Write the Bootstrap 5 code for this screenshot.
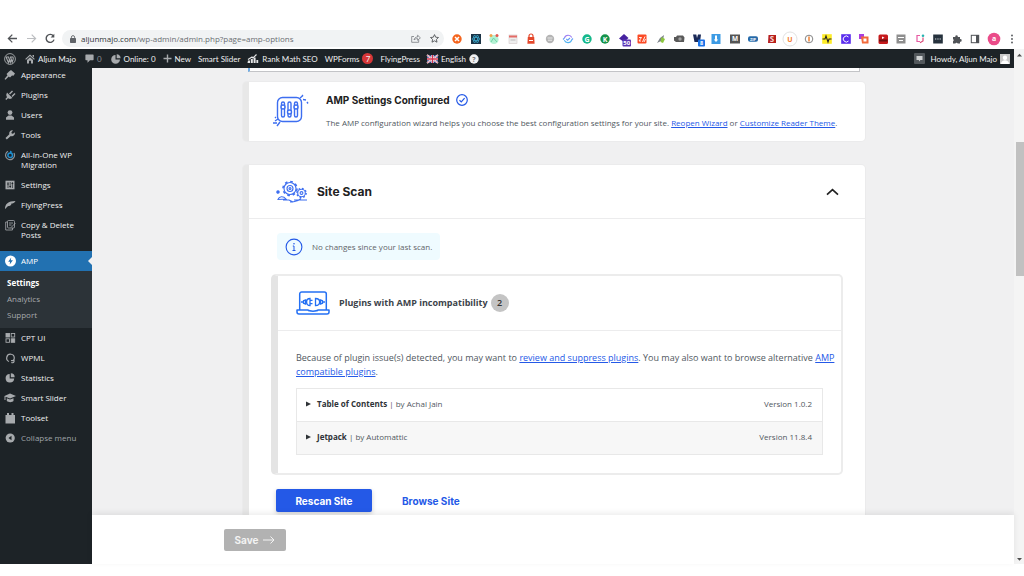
<!DOCTYPE html>
<html lang="en">
<head>
<meta charset="utf-8">
<meta name="viewport" content="width=device-width, initial-scale=1">
<title>AMP Settings</title>
<link href="https://cdn.jsdelivr.net/npm/bootstrap@5.3.0/dist/css/bootstrap.min.css" rel="stylesheet">
<style>
  body { font-family: "Open Sans", "Noto Sans", sans-serif; font-size: 8px; line-height: 10px; color: #50575e; background: #fff; }
  svg { display: block; flex: none; overflow: visible; }
  button { border: 0; background: none; padding: 0; color: inherit; }
  svg text { font-family: "Open Sans", sans-serif; font-weight: 700; text-anchor: middle; }
  .shell { height: 100vh; padding: 28px 0 12px; }
  .heading { font-family: Inter, "Open Sans", sans-serif; font-weight: 700; color: #212121; }
  .rule { border-bottom: 1px solid #ececed; }

  /* browser toolbar */
  .toolbar { height: 21px; padding: 0 6px 0 7px; }
  .address { height: 17px; background: #f1f3f4; padding: 0 5px 0 8px; margin-left: 7px; }
  .address input { border: 0; background: none; outline: 0; color: #6b6f73; font-size: 8px; line-height: 12px; padding: 0; width: 0; }
  .address .host { color: #303336; }
  .extensions { width: 567px; margin-left: 7px; }

  /* admin bar */
  .adminbar { height: 19px; background: #1d2327; color: #f0f0f1; padding: 0 4px; margin-right: 10px; font-family: Lato, "Open Sans", sans-serif; }
  .adminbar a { color: #f0f0f1; text-decoration: none; gap: 3px; }
  .adminbar > a + a { margin-left: 7px; }
  .adminbar > a:nth-child(-n+4) { margin-left: 9px; }
  .adminbar > a:first-child { margin-left: 0; }
  .count { background: #d63638; width: 11px; height: 11px; border-radius: 50%; }

  /* side menu */
  .sidemenu { width: 92px; background: #1d2327; overflow: hidden; }
  .sidemenu ul { margin: -3px 0 0; }
  .sidemenu a, .sidemenu button { color: #f0f0f1; text-decoration: none; padding: 5px 4px; gap: 5px; text-align: left; }
  .sidemenu .active { background: #2271b1; margin-top: 6px; color: #fff; position: relative; }
  .sidemenu .active::after { content: ""; position: absolute; right: 0; top: 6px; border: 4px solid transparent; border-right-color: #f0f0f1; border-left: 0; }
  .sidemenu .submenu { background: #2c3338; margin: 0; padding: 4px 0 5px; }
  .sidemenu .submenu a { padding: 3px 7px; color: #a7aaad; }
  .sidemenu .submenu .current { color: #fff; font-weight: 700; }
  .sidemenu .fade-item { color: #a0a5aa; }

  /* content */
  .content { background: #f0f0f1; overflow: hidden; padding-left: 2px; }
  .column { max-width: 622px; }
  .notice { height: 4px; background: #fff; border: 1px solid #c3c4c7; border-top: 0; border-left: 2px solid #72aee6; margin: 0 5px; }
  .panel { background: #fff; border-left: 6px solid #e8e8e8; border-radius: 4px; box-shadow: 0 0 0 1px #ebebec; }
  .content a { color: #2459e7; }
  .info { background: #effbff; border-radius: 4px; padding: 4px 8px; gap: 9px; height: 27px; color: #5f6368; }
  .subpanel { border: 1px solid #ececec; border-width: 2px 2px 2px 7px; border-left-color: #e4e4e4; border-radius: 5px; }
  .bubble { background: #c4c4c4; width: 18px; height: 18px; border-radius: 50%; color: #333; font-size: 9px; }
  .body-text { font-size: 9px; line-height: 14px; }
  .plugins { border: 1px solid #e8e8e8; margin-right: 16px; }
  .plugins summary { height: 32px; list-style: none; padding: 0 10px 2px 9px; }
  .plugins details + details { border-top: 1px solid #e8e8e8; background: #f7f7f7; }
  .plugins strong { color: #2f3337; }
  .rescan { background: #2459e7; color: #fff; border-radius: 2px; width: 96px; height: 23px; font-size: 10px; box-shadow: 0 2px 5px #00000030; }
  .savebar { height: 49px; background: #fff; box-shadow: 0 -2px 6px #00000014; z-index: 1; }
  .savebar > div { max-width: 658px; padding-top: 14px; }
  .save { background: #b2b2b2; width: 62px; height: 22px; border-radius: 2px; font-size: 10px; gap: 5px; }

  .scroll { width: 10px; background: #f4f4f4; margin-top: -19px; }
  .thumb { width: 8px; height: 134px; background: #c1c1c1; margin-top: 83px; }
</style>
</head>
<body>
<div class="shell d-flex flex-column overflow-hidden">

  <header class="toolbar d-flex align-items-center flex-shrink-0">
    <div class="d-flex align-items-center" style="gap:8px">
      <button aria-label="Back"><svg width="11" height="11" viewBox="0 0 11 11" fill="none" stroke="#505357" stroke-width="1.3"><path d="M10 5.5H1.5M5.3 1.6 1.4 5.5l3.9 3.9"/></svg></button>
      <button aria-label="Forward"><svg width="11" height="11" viewBox="0 0 11 11" fill="none" stroke="#bcbec1" stroke-width="1.2"><path d="M1 5.5h8.5M5.7 1.6l3.9 3.9-3.9 3.9"/></svg></button>
      <button aria-label="Reload"><svg width="10" height="11" viewBox="0 0 10 11" fill="none" stroke="#505357" stroke-width="1.4"><path d="M8.4 3A4 4 0 1 0 9 6.6"/><path d="M9.3.8v3.7H5.6z" fill="#505357" stroke="none"/></svg></button>
    </div>
    <div class="address rounded-pill d-flex align-items-center flex-grow-1">
      <svg width="6" height="8" viewBox="0 0 6 8"><path d="M1.4 3.5V2.2a1.6 1.6 0 0 1 3.2 0v1.3" fill="none" stroke="#5f6368" stroke-width=".9"/><rect y="3" width="6" height="5" rx=".7" fill="#5f6368"/></svg>
      <label class="host" for="url" style="margin-left:5px">aljunmajo.com</label>
      <input id="url" class="flex-grow-1" value="/wp-admin/admin.php?page=amp-options">
      <svg width="10" height="9" viewBox="0 0 10 9" fill="none" stroke="#777b80" stroke-width=".8"><path d="M3 2.5H.7v5.8h7V6M3 6c.3-2 1.600-3 3.600-3V1.200L9.400 3.900 6.600 6.300V4.600C5 4.600 4 5 3 6z"/></svg>
      <svg style="margin-left:9px" width="9" height="9" viewBox="0 0 9 9" fill="none" stroke="#505357" stroke-width=".9"><path d="m4.500.6 1.200 2.600 2.800.3-2.100 1.900.6 2.800-2.500-1.400L2 8.200l.6-2.800L.5 3.500l2.800-.3z"/></svg>
    </div>
    <div class="extensions d-flex align-items-center justify-content-between">
      <svg width="12" height="12" viewBox="0 0 12 12"><circle cx="6" cy="6" r="4.700" fill="#f4641d"/><path d="m4 4 4 4M8 4 4 8" stroke="#fff" stroke-width="1.500"/></svg>
      <svg width="12" height="12" viewBox="0 0 12 12"><rect x="1" y="1" width="10" height="10" fill="#1c3345"/><g fill="none" stroke="#3faed2" stroke-width=".7"><ellipse cx="6" cy="6" rx="4" ry="1.600"/><ellipse cx="6" cy="6" rx="4" ry="1.600" transform="rotate(60 6 6)"/><ellipse cx="6" cy="6" rx="4" ry="1.600" transform="rotate(120 6 6)"/></g></svg>
      <svg width="12" height="12" viewBox="0 0 12 12"><circle cx="6" cy="6.500" r="4.600" fill="#b4f1d3"/><circle cx="3" cy="2.500" r="1.500" fill="#f2a44a"/><circle cx="9" cy="2.500" r="1.500" fill="#e25950"/><path d="m3 9 2.500-4L9 9" fill="none" stroke="#6fd3a8"/></svg>
      <svg width="12" height="12" viewBox="0 0 12 12"><rect x="2" y="2" width="8" height="8.500" fill="#eee" stroke="#d4c9c9" stroke-width=".6"/><path d="M2 3.500h8" stroke="#e46b66" stroke-width="2"/><path d="M3.500 7h5" stroke="#bbb"/></svg>
      <svg width="12" height="12" viewBox="0 0 12 12"><path d="M4 4V3a2 2 0 0 1 4 0v1" fill="none" stroke="#e4482c" stroke-width="1.200"/><path d="M2.800 4h6.400l.4 6.700H2.400z" fill="#e4482c"/><path d="M4 7.500h4" stroke="#fff"/></svg>
      <svg width="12" height="12" viewBox="0 0 12 12"><circle cx="6" cy="6" r="4.200" fill="#b5b5b5"/><path d="M3.500 5h5M4 7.200h4" stroke="#eee" stroke-width=".9"/></svg>
      <svg width="12" height="12" viewBox="0 0 12 12" fill="none" stroke-width="1.100"><path d="M2.400 5a4 4 0 0 1 7.400-.4" stroke="#9a7cf3"/><path d="M9.700 7a4 4 0 0 1-7.400.3" stroke="#4fb2f0"/><path d="M1 6.500 2.500 5M11 5.500 9.500 7M4.300 6l1.300 1.200L8 5" stroke="#62a0f4"/></svg>
      <svg width="12" height="12" viewBox="0 0 12 12"><circle cx="6" cy="6" r="4.700" fill="#15b88a"/><text x="6" y="8.600" font-size="7" fill="#fff">G</text></svg>
      <svg width="12" height="12" viewBox="0 0 12 12"><circle cx="6" cy="6" r="4.700" fill="#15934b"/><text x="6" y="8.600" font-size="7" fill="#fff">K</text></svg>
      <svg width="12" height="12" viewBox="0 0 12 12"><path d="M1 5.500 6 1l4.500 4L6 9z" fill="#4622a0"/><rect x="4.500" y="6.500" width="8.500" height="7" rx="1" fill="#5b36b5"/><text x="8.800" y="12.200" font-size="6" fill="#fff">50</text></svg>
      <svg width="12" height="12" viewBox="0 0 12 12"><rect x="1.500" y="1.500" width="9" height="9" rx="1" fill="#fb4a25"/><path d="M3 4.500h2.500L3 8h2M9 3.500 6.500 9M9.500 6 8 9" stroke="#fff" fill="none" stroke-width=".9"/></svg>
      <svg width="12" height="12" viewBox="0 0 12 12"><path d="m2 10 3-5 4-3-1 5z" fill="#7c8288"/><path d="m5.500 9 1-5 3.500 2-2 4z" fill="#8cc63f"/></svg>
      <svg width="12" height="12" viewBox="0 0 12 12"><path d="M1 4h2l1-1.500h6l1.500 2L11 9H3L1 7.500z" fill="#595959"/><circle cx="7" cy="6" r="1.700" fill="#a0a0a0"/></svg>
      <svg width="12" height="12" viewBox="0 0 12 12"><path d="M1 1.500h3.300L5 5l1-3.500h3L8 9H2.500z" fill="#1b2a58"/><rect x="6" y="6.500" width="7" height="7" rx="1" fill="#1a73e8"/><text x="9.500" y="12" font-size="5.500" fill="#fff">8</text></svg>
      <svg width="12" height="12" viewBox="0 0 12 12"><rect x="1.500" y="1" width="9" height="10" fill="#3d9be4"/><path d="M5 2.500h2v4h1.300L6 9 3.700 6.500H5z" fill="#fff"/></svg>
      <svg width="12" height="12" viewBox="0 0 12 12"><rect x="1" y="1.500" width="10" height="9" fill="#555"/><text x="6" y="8.400" font-size="6.500" fill="#fff">M</text></svg>
      <svg width="12" height="12" viewBox="0 0 12 12"><rect x="1" y="3.200" width="10" height="5.600" rx="2" fill="#2569a8"/><text x="6" y="7.500" font-size="4" fill="#fff">ZIP</text></svg>
      <svg width="12" height="12" viewBox="0 0 12 12"><path d="M2.500 2h7.500v8H2z" fill="#b71f1b"/><text x="6" y="9" font-size="8" fill="#f3d5d3">S</text></svg>
      <svg width="12" height="12" viewBox="0 0 12 12"><circle cx="6" cy="6" r="7" fill="#fff" stroke="#dedede" stroke-width=".9"/><text x="6" y="8.600" font-size="7" fill="#f27b30">U</text></svg>
      <svg width="12" height="12" viewBox="0 0 12 12"><circle cx="6" cy="6" r="3.800" fill="#fff" stroke="#666" stroke-width=".8"/><path d="M6 3.500v5" stroke="#f08030" stroke-width="1.500"/></svg>
      <svg width="12" height="12" viewBox="0 0 12 12"><rect x="1.200" y="1.200" width="9.600" height="9.600" fill="#fdec27"/><path d="M1.500 6H4l1-3 2 6 1-3h2.500" fill="none" stroke="#222" stroke-width="1.100"/></svg>
      <svg width="12" height="12" viewBox="0 0 12 12"><rect x="1.200" y="1.200" width="9.600" height="9.600" fill="#5b2eee"/><path d="M8.500 4a3 3 0 1 0 0 4" fill="none" stroke="#fff"/></svg>
      <svg width="12" height="12" viewBox="0 0 12 12"><path d="M1 1h5v5H1z" fill="#a93de0"/><path d="M3 3.500h7.500v7H4z" fill="#f26a3a"/><rect x="5.500" y="5.500" width="3" height="3" fill="#fff"/></svg>
      <svg width="12" height="12" viewBox="0 0 12 12"><rect x="1.500" y="1.500" width="9.500" height="9.500" rx="1.500" fill="#c61a1c"/><path d="M2 7.500h8.500" stroke="#6b1112" stroke-width="2"/><path d="m5 3.500 2.500 1.300L5 6z" fill="#fff"/></svg>
      <svg width="12" height="12" viewBox="0 0 12 12"><rect x="1.500" y="1.500" width="9" height="9" fill="#8e8e8e"/><path d="M3 4.500h6M4 7.500h4" stroke="#fff" stroke-width="1.200"/></svg>
      <svg width="12" height="12" viewBox="0 0 12 12" fill="none" stroke-width="1.200"><path d="M6 2.500H3v6h3" stroke="#e75aa2"/><path d="M6 9.800 9 8V4.500" stroke="#d94b79"/><circle cx="9" cy="2.700" r="1.300" fill="#25b4b1" stroke="none"/></svg>
      <svg width="12" height="12" viewBox="0 0 12 12"><rect x="1.200" y="1.500" width="9.600" height="9" fill="#26323d"/><path d="M3 6h6" stroke="#cfd5da" stroke-width="1.200" stroke-dasharray="1.300 1"/></svg>
      <svg width="12" height="12" viewBox="0 0 12 12"><path d="M2 4h2.300a1.300 1.300 0 1 1 2.500 0H9v2.200a1.300 1.300 0 1 1 0 2.500V10.500H6.700a1.200 1.200 0 0 0-2.300 0H2V8.300a1.300 1.300 0 0 0 0-2.200z" fill="#505357"/></svg>
      <svg width="12" height="12" viewBox="0 0 12 12"><rect x="2.300" y="2.300" width="7.400" height="7.400" fill="none" stroke="#505357"/><path d="M7 2v8h3V2z" fill="#505357"/></svg>
      <svg width="12" height="12" viewBox="0 0 12 12"><circle cx="6" cy="6" r="6.300" fill="#ea4c89"/><text x="6" y="8.200" font-size="7" fill="#fff">a</text></svg>
      <svg width="12" height="12" viewBox="0 0 12 12" fill="#505357"><circle cx="6" cy="2.500" r=".9"/><circle cx="6" cy="6" r=".9"/><circle cx="6" cy="9.500" r=".9"/></svg>
    </div>
  </header>

  <nav class="adminbar d-flex align-items-center flex-shrink-0">
    <a href="#" aria-label="WordPress"><svg width="12" height="12" viewBox="0 0 12 12"><circle cx="6" cy="6" r="5.400" fill="none" stroke="#a7aaad" stroke-width=".9"/><path d="M1.800 4h2.700L6.300 9.500 7.300 6.500 6.500 4M5.900 4H9c.9 1.500 0 3-.8 5.200L6.700 4.500M2.200 4.300l2.200 5.400 1.400-4" fill="none" stroke="#a7aaad" stroke-width="1.100"/></svg></a>
    <a href="#" class="d-flex align-items-center"><svg width="10" height="10" viewBox="0 0 10 10" fill="#a7aaad"><path d="M5 .5 9.800 5l-.8.700-4-3.700-4 3.700L.2 5zM2 5.900l3-2.700 3 2.700v3.600H6V6.800H4v2.700H2z"/><path d="M7.500 1H9v2.500L7.500 2z"/></svg>Aljun Majo</a>
    <a href="#" class="d-flex align-items-center" style="color:#8c8f94"><svg width="9" height="9" viewBox="0 0 9 9"><path d="M1 .5h7a.6.6 0 0 1 .6.600v4.500a.6.6 0 0 1-.6.600H5L2.500 8.700V6.200H1a.6.6 0 0 1-.6-.6V1.100A.6.600 0 0 1 1 .5z" fill="#a7aaad"/></svg>0</a>
    <a href="#" class="d-flex align-items-center"><svg width="10" height="10" viewBox="0 0 10 10" fill="#a7aaad"><path d="M4.500 1v4.500H9A4.400 4.400 0 1 1 4.500 1z"/><path d="M5.700.300A4.200 4.200 0 0 1 9.600 4.300H5.700z"/></svg>Online: 0</a>
    <a href="#" class="d-flex align-items-center"><svg width="9" height="9" viewBox="0 0 9 9"><path d="M4.500.5v8M.5 4.500h8" stroke="#a7aaad" stroke-width="1.400"/></svg>New</a>
    <a href="#">Smart Slider</a>
    <a href="#" class="d-flex align-items-center"><svg width="12" height="9" viewBox="0 0 12 9" fill="#e6e7e8"><path d="M1 6.500h2V9H.5zM3.800 5h2v4h-2zM6.600 3.500h2V9h-2zM9.400 6h1.800v3H9.400z"/><path d="M1 5.500 5 3l1 1 3.500-3.500" fill="none" stroke="#e6e7e8" stroke-width="1.200"/></svg>Rank Math SEO</a>
    <a href="#" class="d-flex align-items-center">WPForms <span class="count d-flex align-items-center justify-content-center">7</span></a>
    <a href="#">FlyingPress</a>
    <a href="#" class="d-flex align-items-center"><svg width="11" height="8" viewBox="0 0 11 8"><rect width="11" height="8" fill="#243a84"/><path d="m0 0 11 8M11 0 0 8" stroke="#fff" stroke-width="1.600"/><path d="m0 0 11 8M11 0 0 8" stroke="#d3324c" stroke-width=".6"/><path d="M5.500 0v8M0 4h11" stroke="#fff" stroke-width="2.400"/><path d="M5.500 0v8M0 4h11" stroke="#d3324c" stroke-width="1.300"/></svg>English <svg width="10" height="10" viewBox="0 0 10 10"><circle cx="5" cy="5" r="4.700" fill="#f0f0f1"/><text x="5" y="7.600" font-size="7" fill="#777">?</text></svg></a>
    <div class="d-flex align-items-center ms-auto">
      <svg width="11" height="11" viewBox="0 0 11 11"><rect width="11" height="11" rx="1" fill="#53585c"/><path d="M2.500 3h6v4H6.300L5.500 8.500 4.700 7H2.500z" fill="#d0d2d3"/></svg>
      <a href="#" class="d-flex align-items-center" style="margin-left:5px">Howdy, Aljun Majo <svg width="10" height="10" viewBox="0 0 10 10"><rect width="10" height="10" fill="#c9c9c9"/><circle cx="5" cy="3.800" r="2.200" fill="#fff"/><path d="M1 10c0-5 8-5 8 0z" fill="#fff"/></svg></a>
    </div>
  </nav>

  <div class="d-flex flex-grow-1" style="min-height:0">
    <nav class="sidemenu flex-shrink-0">
      <ul class="list-unstyled">
        <li><a href="#" class="d-flex"><svg width="12" height="10" viewBox="0 0 12 10" fill="#a7aaad"><path d="m5 1.500 2-1.500 4 3.500-1.500 2.200-1.500-.2-2 2-1.200-1L1.500 9.800.500 9l3-3.700-1-1.200z"/></svg>Appearance</a></li>
        <li><a href="#" class="d-flex"><svg width="12" height="10" viewBox="0 0 12 10" fill="#a7aaad"><path d="M3 2.500 8.500 8 6 9 4 8.300 2.300 10l-1-1L3 7.300 2.200 5zM5 3.500 8 .5l1 1-3 3zM7.500 6l3-3 1 1-3 3z"/></svg>Plugins</a></li>
        <li><a href="#" class="d-flex"><svg width="12" height="10" viewBox="0 0 12 10" fill="#a7aaad"><circle cx="6" cy="2.600" r="2.400"/><path d="M2 9.800V7.500l2.500-2h3l2.500 2v2.300z"/></svg>Users</a></li>
        <li><a href="#" class="d-flex"><svg width="12" height="10" viewBox="0 0 12 10" fill="#a7aaad"><path d="M10.800 2.200 9 3.800l-1.300-.3-.3-1.300L9 .5a3 3 0 0 0-3.700 3.800L1.500 8l1.300 1.500 4-3.600a3 3 0 0 0 4-3.700z"/></svg>Tools</a></li>
        <li><a href="#" class="d-flex"><svg width="12" height="10" viewBox="0 0 12 10" fill="none"><path d="M4 1.200A4.500 4.500 0 1 0 10 3" stroke="#8d9297" stroke-width="1.200"/><circle cx="6.200" cy="5.200" r="2.300" stroke="#1f8fd1" stroke-width="1.500"/><path d="M6 .500 8.500 2 6 3.500z" fill="#1f8fd1"/></svg>All-in-One WP Migration</a></li>
        <li><a href="#" class="d-flex"><svg width="12" height="10" viewBox="0 0 12 10"><rect x="1.500" y=".7" width="9" height="8.600" fill="#a7aaad"/><path d="M4 2v6M6.200 2v6M8.400 2v6" stroke="#1d2327" stroke-width=".7"/><path d="M3.200 4h1.600M5.400 6.500H7M7.600 3.500h1.600" stroke="#1d2327"/></svg>Settings</a></li>
        <li><a href="#" class="d-flex"><svg width="12" height="10" viewBox="0 0 12 10" fill="#a7aaad"><path d="M1 9C1 4 4 1 11.500 1 10.500 3 9 3.500 7 3.800 8 4.500 6.500 6 4.500 6 3 6.500 2.500 8 1 9z"/></svg>FlyingPress</a></li>
        <li><a href="#" class="d-flex"><svg width="12" height="10" viewBox="0 0 12 10" fill="none" stroke="#a7aaad" stroke-width=".8"><rect x="3.500" y=".5" width="7" height="7.500" rx="1"/><path d="M3.500 2H1.700v8h6.800V8M5 3h4M5 5h2.500M7 7.500 11.500 3"/></svg>Copy &amp; Delete Posts</a></li>
        <li><a href="#" class="d-flex active"><svg width="12" height="10" viewBox="0 0 12 10"><circle cx="6.500" cy="5" r="5.500" fill="#fff"/><path d="M7.200 1.500 4.200 5.800h1.900L5.700 8.500 8.900 4.300H6.800z" fill="#2271b1"/></svg>AMP</a>
          <ul class="list-unstyled submenu">
            <li><a href="#" class="d-block current">Settings</a></li>
            <li><a href="#" class="d-block">Analytics</a></li>
            <li><a href="#" class="d-block">Support</a></li>
          </ul></li>
        <li><a href="#" class="d-flex"><svg width="12" height="10" viewBox="0 0 12 10" fill="none" stroke="#a7aaad" stroke-width=".9"><rect x="2" y=".5" width="3.500" height="3.500" fill="#a7aaad"/><rect x="7.200" y=".5" width="3.500" height="3.500"/><rect x="2" y="5.800" width="3.500" height="3.500"/><rect x="7.200" y="5.800" width="3.500" height="3.500" fill="#a7aaad"/></svg>CPT UI</a></li>
        <li><a href="#" class="d-flex"><svg width="12" height="10" viewBox="0 0 12 10" fill="none" stroke="#a7aaad" stroke-width="1.200"><path d="M5 8.500A3.800 3.800 0 1 1 10.300 5c0 2-1.500 3-3.300 2.500M10 6.500v2.200c-.7 1.300-2 1.200-2.600.6"/></svg>WPML</a></li>
        <li><a href="#" class="d-flex"><svg width="12" height="10" viewBox="0 0 12 10" fill="#a7aaad"><path d="M5.700 1v4.500h4.500A4.300 4.300 0 1 1 5.700 1z"/><path d="M6.800.3a4.100 4.100 0 0 1 3.900 4H6.800z"/></svg>Statistics</a></li>
        <li><a href="#" class="d-flex"><svg width="12" height="10" viewBox="0 0 12 10" fill="#a7aaad"><path d="M6 .5 12 3 6 5.500 1.500 3.700V7H.5V3zM2.800 5.300 6 6.600l3.500-1.300v2.800C8 9.500 4.500 9.500 2.800 8z"/></svg>Smart Slider</a></li>
        <li><a href="#" class="d-flex"><svg width="12" height="10" viewBox="0 0 12 10" fill="#a7aaad"><path d="M1.500 2H3V0h2v2h2.500V0h2v2H11v8.500H1.500z"/></svg>Toolset</a></li>
        <li><button class="d-flex fade-item"><svg width="12" height="10" viewBox="0 0 12 10"><circle cx="6.200" cy="5" r="4.600" fill="#a7aaad"/><path d="M7.500 2.800v4.400L4.500 5z" fill="#1d2327"/></svg>Collapse menu</button></li>
      </ul>
    </nav>

    <div class="d-flex flex-column flex-grow-1" style="min-width:0">
      <main class="content flex-grow-1">
        <div class="column mx-auto">
          <div class="notice"></div>

          <section class="panel d-flex" style="margin-top:10px;padding:10px 24px 11px">
            <svg width="36" height="36" viewBox="0 0 36 36" fill="none" stroke="#3d6ef0" stroke-width="1.400"><rect x="4.500" y="5.500" width="24" height="24" rx="5"/><rect x="8.500" y="10" width="3" height="15" rx="1.500"/><rect x="15" y="10" width="3" height="15" rx="1.500"/><rect x="21.500" y="10" width="3" height="15" rx="1.500"/><g fill="#fff"><circle cx="10" cy="15" r="2"/><circle cx="16.500" cy="20" r="2"/><circle cx="23" cy="15" r="2"/></g><path d="m27 6 3-2.500M30 7.500l3 .5M34 10l1 1.500M29 4l1-1M5 27l-3 2M0 31h4M7 30l-3 4M2 26l1-1"/></svg>
            <div style="margin-left:17px">
              <div class="d-flex align-items-center" style="gap:6px"><h2 class="heading m-0" style="font-size:10px;line-height:16px">AMP Settings Configured</h2>
                <svg width="12" height="12" viewBox="0 0 12 12" fill="none" stroke="#2459e7" stroke-width="1.200"><circle cx="6" cy="6" r="5.300"/><path d="m3.500 6.200 1.800 1.700 3.300-3.700"/></svg></div>
              <p class="mb-0" style="margin-top:8px;line-height:14px">The AMP configuration wizard helps you choose the best configuration settings for your site. <a href="#">Reopen Wizard</a> or <a href="#">Customize Reader Theme</a>.</p>
            </div>
          </section>

          <section class="panel" style="margin-top:24px;height:480px">
            <header class="d-flex align-items-center rule" style="height:54px;padding:0 26px 0 27px">
              <svg width="32" height="24" viewBox="0 0 32 24" fill="none" stroke="#3d6ef0" stroke-width="1.100"><circle cx="14" cy="8.500" r="6"/><circle cx="14" cy="8.500" r="7" stroke-width="1.600" stroke-dasharray="2.600 2.900"/><circle cx="14" cy="8.500" r="3"/><circle cx="14" cy="8.500" r="1"/><circle cx="25.500" cy="13" r="3.800"/><circle cx="25.500" cy="13" r="4.600" stroke-width="1.500" stroke-dasharray="1.700 1.900"/><circle cx="25.500" cy="13" r="1.400"/><circle cx="2" cy="12" r="1.200" fill="#3d6ef0"/><path d="M2 19.500c1-3 5-4 8-.500zM7 20h6l4 2 5-1.500 3-2M14 22l5-.5M18 20h13"/></svg>
              <h2 class="heading m-0" style="margin-left:9px!important;font-size:12px;line-height:16px">Site Scan</h2>
              <button class="ms-auto" aria-label="Collapse site scan"><svg width="13" height="8" viewBox="0 0 13 8" fill="none" stroke="#212121" stroke-width="1.700"><path d="m1 6.700 5.500-5 5.500 5"/></svg></button>
            </header>
            <div style="padding:14px 22px 0 22px">
              <div class="info d-inline-flex align-items-center" style="margin-left:6px">
                <svg width="18" height="18" viewBox="0 0 18 18"><circle cx="9" cy="9" r="7.900" fill="none" stroke="#2459e7" stroke-width="1.100"/><circle cx="9" cy="5.700" r=".8" fill="#2459e7"/><path d="M7.800 8H9v4.500M7.500 12.500h3" fill="none" stroke="#2459e7"/></svg>
                No changes since your last scan.
              </div>
              <div class="subpanel" style="margin-top:14px">
                <header class="d-flex align-items-center rule" style="height:55px;padding:0 18px">
                  <svg width="34" height="24" viewBox="0 0 34 24" fill="none" stroke="#2470f4" stroke-width="1.500"><path d="M3.700 19V3a2 2 0 0 1 2-2h22.600a2 2 0 0 1 2 2v16M1 19h11c1 1.500 9 1.500 10 0h11v2a2 2 0 0 1-2 2H3a2 2 0 0 1-2-2zM5 11h3M29 11h-2" stroke-linejoin="round"/><path d="M7.500 9.800v2.400l2 .8V9zM14 7.500c-4.500 0-4.500 7 0 7zM14 9.300h2.500M14 12.700h2.500M19.500 7.500c5.500 0 5.500 7 0 7zM26.500 9.800v2.400l-2 .8V9z" stroke-width="1.300"/></svg>
                  <h3 class="m-0 fw-bold" style="margin-left:9px!important;font-size:9px;line-height:14px;color:#3c434a">Plugins with AMP incompatibility</h3>
                  <span class="bubble fw-semibold d-flex align-items-center justify-content-center" style="margin-left:3px">2</span>
                </header>
                <div style="padding:20px 2px 18px 18px">
                  <p class="body-text" style="margin:0 0 9px">Because of plugin issue(s) detected, you may want to <a href="#">review and suppress plugins</a>. You may also want to browse alternative <a href="#">AMP compatible plugins</a>.</p>
                  <div class="plugins">
                    <details><summary class="d-flex align-items-center"><svg width="5" height="6" viewBox="0 0 5 6"><path d="M0 .5 5 3 0 5.500z" fill="#2f3337"/></svg><span style="margin-left:6px"><strong>Table of Contents</strong> | by Achal Jain</span><span class="ms-auto">Version 1.0.2</span></summary></details>
                    <details><summary class="d-flex align-items-center"><svg width="5" height="6" viewBox="0 0 5 6"><path d="M0 .5 5 3 0 5.500z" fill="#2f3337"/></svg><span style="margin-left:6px"><strong>Jetpack</strong> | by Automattic</span><span class="ms-auto">Version 11.8.4</span></summary></details>
                  </div>
                </div>
              </div>
              <div class="d-flex align-items-center" style="margin:14px 0 0 5px;gap:30px">
                <button class="rescan heading text-white">Rescan Site</button>
                <a href="#" class="heading text-decoration-none" style="font-size:10px">Browse Site</a>
              </div>
            </div>
          </section>
        </div>
      </main>
      <footer class="savebar flex-shrink-0"><div class="mx-auto"><button class="save heading d-flex align-items-center justify-content-center" style="color:#f3f3f3">Save <svg width="12" height="8" viewBox="0 0 12 8" fill="none" stroke="#f3f3f3"><path d="M0 4h11M7.500.5 11 4 7.500 7.500"/></svg></button></div></footer>
    </div>
    <div class="scroll flex-shrink-0 d-flex flex-column align-items-end">
      <svg width="10" height="10" viewBox="0 0 10 10"><path d="M3 7.500h5L5.500 4.800z" fill="#505050"/></svg>
      <div class="thumb"></div>
      <svg class="mt-auto" width="10" height="10" viewBox="0 0 10 10"><path d="M3 4h5L5.500 6.700z" fill="#505050"/></svg>
    </div>
  </div>
</div>
<script src="https://cdn.jsdelivr.net/npm/bootstrap@5.3.0/dist/js/bootstrap.bundle.min.js"></script>
</body>
</html>
